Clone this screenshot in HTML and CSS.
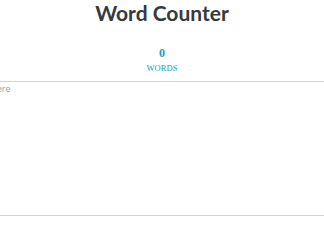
FILE: index.html
```html
<!DOCTYPE html>
<html lang="en">
<head>
  <meta charset="UTF-8">
  <meta name="viewport" content="width=device-width, initial-scale=1.0">
  <title>Word Counter</title>
  <link rel="stylesheet" href="styles.css">
</head>
<body>
  <div class="app">
    <h1 class="title">Word Counter</h1>
    <div class="stats">
      <div class="stat">
        <span class="stat-value" id="words">0</span>
        <span class="stat-label">Words</span>
      </div>
    </div>
    <div class="editor">
      <textarea id="text" placeholder="Type or paste your text here"></textarea>
    </div>
  </div>

  <script>
    const text = document.getElementById('text');
    const words = document.getElementById('words');

    // Count words on input
    text.addEventListener('input', () => {
      const list = text.value.trim().split(/\s+/).filter(Boolean);
      words.textContent = list.length;
    });
  </script>
</body>
</html>
```

FILE: styles.css
```css
body {
  margin: 0;
  font-family: Lato, "Open Sans", Arial, sans-serif;
  background: #fff;
  overflow: hidden;
}

.app {
  display: flex;
  flex-direction: column;
  align-items: center;
}

.title {
  margin: 0;
  font-size: 21px;
  line-height: 26px;
  font-weight: 700;
  color: #343a40;
}

.stats {
  display: flex;
  justify-content: center;
  margin-top: 19px;
}

.stat {
  display: flex;
  flex-direction: column;
  align-items: center;
  font-family: "Liberation Serif", "Times New Roman", serif;
  color: #17a2b8;
}

.stat-value {
  font-size: 12px;
  font-weight: 700;
  line-height: 17px;
}

.stat-label {
  font-size: 8.5px;
  line-height: 12px;
  text-transform: uppercase;
  letter-spacing: 0.1px;
}

.editor {
  display: flex;
  justify-content: center;
  width: 100%;
  margin-top: 7px;
}

textarea {
  flex: none;
  width: 554px;
  height: 135px;
  box-sizing: border-box;
  padding: 1px 6px;
  border: 1px solid #d4d4d4;
  font-family: "Open Sans", Arial, sans-serif;
  font-size: 9px;
  line-height: 12px;
  resize: none;
  outline: none;
}

textarea::placeholder {
  color: #999;
}
```
